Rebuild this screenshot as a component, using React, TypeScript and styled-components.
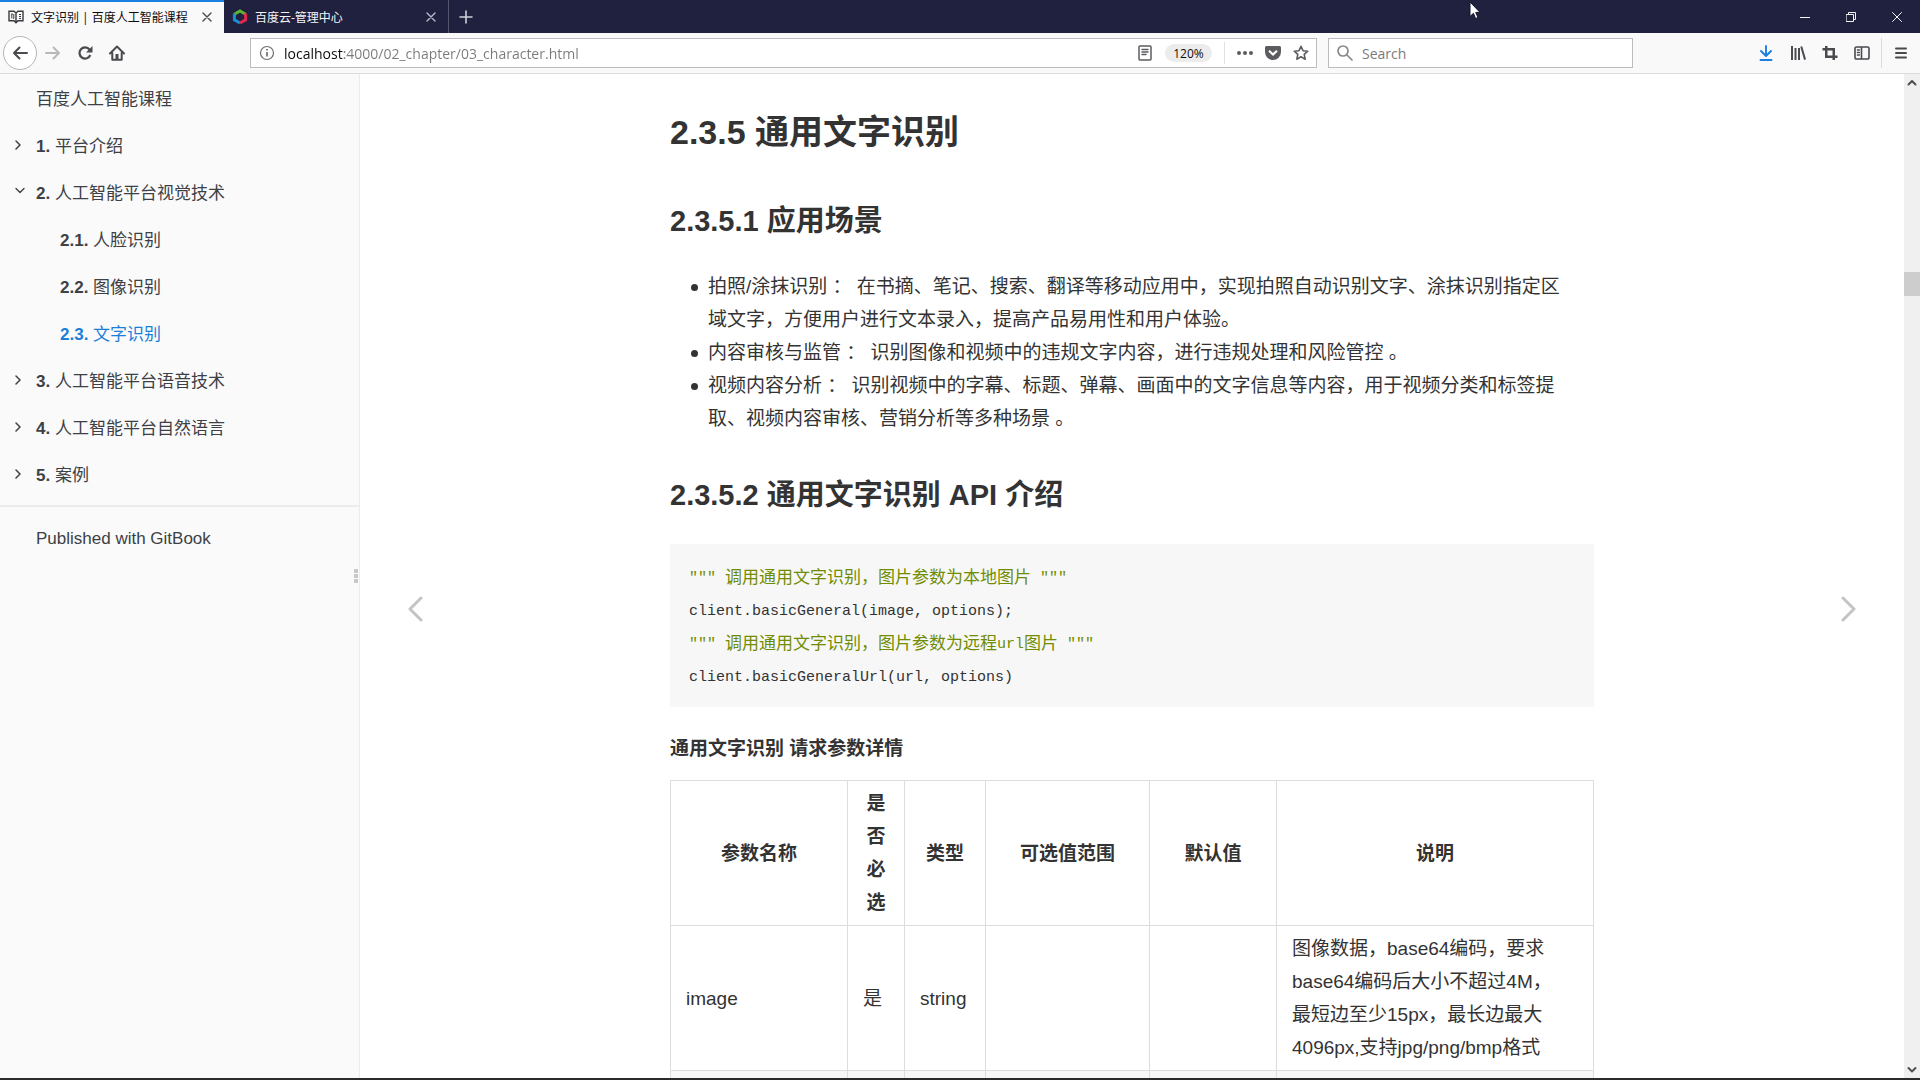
import React from "react";
import styled, { createGlobalStyle, css } from "styled-components";

const sans = '"Liberation Sans", "Noto Sans CJK SC", sans-serif';
const chrome = '"Open Sans", "Noto Sans CJK SC", sans-serif';
const mono = '"Liberation Mono", "Noto Sans CJK SC", monospace';

const GlobalStyle = createGlobalStyle`
  *, *::before, *::after { box-sizing: border-box; }
  body { margin: 0; background: #fff; font-family: ${sans}; overflow: hidden; }
  button, input { font: inherit; color: inherit; margin: 0; }
  button { padding: 0; border: 0; background: none; display: inline-flex; align-items: center; justify-content: center; }
  a { color: inherit; text-decoration: none; }
  svg { display: block; flex: none; }
`;

const Window = styled.div`
  display: flex;
  flex-direction: column;
  height: 100vh;
  overflow: hidden;
  border-bottom: 2px solid #2c2a2c;
`;

/* ---------- title bar ---------- */

const TitleBar = styled.header`
  position: relative;
  display: flex;
  flex: none;
  height: 33px;
  background: #20213f;
  font-family: ${chrome};
  font-size: 12px;
  color: #f4f4f8;
`;

const Tab = styled.div<{ $active?: boolean }>`
  display: flex;
  align-items: center;
  width: 224px;
  padding: 0 8px;
  gap: 7px;
  ${(p) =>
    p.$active &&
    css`
      background: #f9f9fa;
      color: #0c0c0d;
      box-shadow: inset 0 2px 0 #1a7fe0;
    `}
`;

const TabTitle = styled.span`
  flex: 1;
  white-space: nowrap;
  overflow: hidden;
`;

const TabClose = styled.button<{ $dark?: boolean }>`
  width: 18px;
  height: 18px;
  color: ${(p) => (p.$dark ? "#4a4a4f" : "#b9b9c8")};
`;

const NewTab = styled.button`
  width: 34px;
  border-left: 1px solid #55566e;
  color: #cfcfda;
`;

const WindowControls = styled.div`
  display: flex;
  margin-left: auto;
`;

const WindowButton = styled.button`
  width: 46px;
  color: #f4f4f8;
`;

const Pointer = styled.svg`
  position: absolute;
  left: 1469px;
  top: 1px;
`;

/* ---------- toolbar ---------- */

const Toolbar = styled.div`
  display: flex;
  align-items: center;
  flex: none;
  height: 41px;
  padding: 0 3px;
  background: #f9f9fa;
  border-bottom: 1px solid #dcdcde;
  font-family: ${chrome};
  font-size: 14px;
  color: #4a4a4f;
`;

const NavButton = styled.button<{ $faded?: boolean }>`
  width: 32px;
  height: 32px;
  color: ${(p) => (p.$faded ? "#b9b9bb" : "#4a4a4f")};
`;

const BackButton = styled(NavButton)`
  width: 34px;
  height: 34px;
  border: 1px solid #b5b5b7;
  border-radius: 50%;
  background: #fff;
`;

const Field = styled.div`
  display: flex;
  align-items: center;
  height: 30px;
  padding: 0 1px 0 8px;
  background: #fff;
  border: 1px solid #bcbcbe;
  color: #88888a;
`;

const AddressField = styled(Field)`
  flex: 1;
  margin-left: 117px;
`;

const SearchField = styled(Field)`
  width: 305px;
  margin-left: 11px;
`;

const TextInput = styled.input`
  flex: 1;
  min-width: 0;
  height: 26px;
  padding: 0;
  margin-left: 9px;
  border: 0;
  outline: 0;
  background: transparent;
  color: #0c0c0d;
  &::placeholder { color: #7a7a7c; opacity: 1; }
`;

/* host name dark, rest of the address grey */
const AddressInput = styled(TextInput)`
  background: linear-gradient(90deg, #0c0c0d 60px, #7a7a7c 60px);
  background-clip: text;
  -webkit-background-clip: text;
  -webkit-text-fill-color: transparent;
`;

const FieldButton = styled.button`
  width: 28px;
  height: 26px;
  color: #5c5c60;
`;

const ZoomButton = styled.button`
  width: 47px;
  height: 18px;
  margin: 0 12px 0 6px;
  border-radius: 9px;
  background: #ececed;
  font-size: 12px;
  color: #0c0c0d;
`;

const Divider = styled.span`
  width: 1px;
  height: 22px;
  margin-right: 6px;
  background: #e2e2e4;
`;

const Tools = styled.div`
  display: flex;
  align-items: center;
  margin-left: 117px;
`;

const ToolDivider = styled.span`
  width: 1px;
  height: 30px;
  margin: 0 3px;
  background: #dcdcde;
`;

const ToolButton = styled(NavButton)<{ $accent?: boolean }>`
  ${(p) => p.$accent && "color: #1a7fe0;"}
`;

/* ---------- page ---------- */

const Page = styled.div`
  display: flex;
  flex: 1;
  min-height: 0;
`;

const Sidebar = styled.nav`
  position: relative;
  flex: none;
  width: 360px;
  background: #fafafa;
  border-right: 1px solid #ececec;
  font-size: 17px;
  color: #3d4146;
`;

const Summary = styled.ul`
  list-style: none;
  margin: 0;
  padding: 0 0 8px;
`;

const Entry = styled.a<{ $level?: number; $active?: boolean }>`
  display: flex;
  align-items: center;
  height: 47px;
  padding-left: ${(p) => (p.$level === 2 ? 60 : 13)}px;
  color: ${(p) => (p.$active ? "#1a7fd8" : "inherit")};
`;

const Marker = styled.span`
  display: flex;
  width: 23px;
`;

const Published = styled.a`
  display: flex;
  align-items: center;
  height: 66px;
  padding-left: 36px;
  border-top: 2px solid #ececec;
`;

const Grip = styled.span`
  position: absolute;
  right: 1px;
  top: 495px;
  display: grid;
  gap: 1px;
  i { width: 4px; height: 4px; background: #c8c8c8; }
`;

const Body = styled.main`
  position: relative;
  flex: 1;
  overflow: hidden;
  background: #fff;
`;

const Article = styled.article`
  width: 924px;
  margin: 0 auto;
  padding-top: 29px;
  font-size: 19px;
  line-height: 33px;
  color: #333;
`;

const H2 = styled.h2`
  margin: 0;
  font-size: 34px;
  line-height: 58px;
`;

const H3 = styled.h3`
  margin: 36px 0 24px;
  font-size: 29px;
  line-height: 49px;
`;

const Bullets = styled.ul`
  list-style: none;
  margin: 0;
  padding: 0 24px 0 21px;
`;

const Bullet = styled.li`
  display: grid;
  grid-template-columns: 17px 1fr;
  white-space: pre-wrap;
  &::before {
    content: "";
    width: 7px;
    height: 7px;
    margin-top: 14px;
    border-radius: 50%;
    background: #333;
  }
`;

const Code = styled.pre`
  margin: 0;
  padding: 18px 19px 13px;
  background: #f7f7f7;
  font-family: ${mono};
  font-size: 15px;
  line-height: 33px;
`;

const CodeLine = styled.code<{ $string?: boolean }>`
  display: flex;
  height: 33px;
  font-family: inherit;
  color: ${(p) => (p.$string ? "#718c00" : "#333")};
`;

const Han = styled.span`
  font-size: 17px;
`;

const Caption = styled.p`
  margin: 25px 0 15px;
  font-weight: bold;
`;

const Params = styled.table`
  width: 100%;
  table-layout: fixed;
  border-collapse: collapse;
  th, td {
    padding: 6px 15px;
    border: 1px solid #dddddd;
    text-align: left;
  }
  th { text-align: center; }
  tbody tr:nth-child(2n) { background: #f8f8f8; }
`;

const Col = styled.col<{ $width?: number }>`
  ${(p) => p.$width && `width: ${p.$width}px;`}
`;

const PageTurn = styled.a<{ $side: "left" | "right" }>`
  position: absolute;
  top: 522px;
  ${(p) => p.$side}: 47px;
  color: #c4c4c4;
`;

const Scrollbar = styled.div`
  display: flex;
  flex-direction: column;
  align-items: center;
  justify-content: space-between;
  flex: none;
  width: 16px;
  padding: 5px 0 4px;
  background: #f0f0f0;
  color: #505050;
`;

const Thumb = styled.span`
  width: 16px;
  height: 24px;
  margin: 185px 0 auto;
  background: #cdcdcd;
`;

/* ---------- drawings ---------- */

type IconProps = { d: string; w?: number; h?: number; box?: string; stroke?: number; fill?: boolean };
const Icon = ({ d, w = 16, h = w, box = "0 0 16 16", stroke = 2, fill }: IconProps) => (
  <svg
    width={w}
    height={h}
    viewBox={box}
    fill={fill ? "currentColor" : "none"}
    stroke={fill ? "none" : "currentColor"}
    strokeWidth={stroke}
    strokeLinecap="round"
    strokeLinejoin="round"
    aria-hidden="true"
  >
    <path d={d} fillRule="evenodd" />
  </svg>
);

const BookIcon = () => (
  <svg width="16" height="14" viewBox="0 0 16 14" fill="none" stroke="#3c3c40" strokeWidth="1.4" aria-hidden="true">
    <path d="M8 3 6 1.2H1v9.6h5l2 2 2-2h5V1.2h-5L8 3v9" />
    <path d="M3.2 4h1.6M3.8 4v4.5M11 4.5h2M11 6.5h2M11 8.5h2M5.8 4v5" strokeWidth="1" />
  </svg>
);

const CloudIcon = () => (
  <svg width="16" height="16" viewBox="0 0 16 16" fill="none" strokeWidth="3" aria-hidden="true">
    <path d="M2.4 5.2 8 2l5.6 3.2" stroke="#5cb531" />
    <path d="M2.4 4.6v6.2L8 14" stroke="#1b8fd6" />
    <path d="M13.6 4.6v6.2L8 14" stroke="#e0284f" />
  </svg>
);

const CROSS = "M3 3l8 8M11 3l-8 8";
const RIGHT = "M1 1l4 4-4 4";
const DOWN = "M1 1l4 4 4-4";

const Chevron = ({ open }: { open?: boolean }) => (
  <Marker>
    {open ? (
      <Icon d={DOWN} w={14} h={9} box="-2 0 14 8" stroke={1.4} />
    ) : (
      <Icon d={RIGHT} w={10} h={12} box="-2 -1 10 12" stroke={1.5} />
    )}
  </Marker>
);

/* ---------- data ---------- */

type Chapter = { no?: string; title: string; level?: number; open?: boolean; active?: boolean };
const chapters: Chapter[] = [
  { title: "百度人工智能课程" },
  { no: "1.", title: "平台介绍" },
  { no: "2.", title: "人工智能平台视觉技术", open: true },
  { no: "2.1.", title: "人脸识别", level: 2 },
  { no: "2.2.", title: "图像识别", level: 2 },
  { no: "2.3.", title: "文字识别", level: 2, active: true },
  { no: "3.", title: "人工智能平台语音技术" },
  { no: "4.", title: "人工智能平台自然语言" },
  { no: "5.", title: "案例" },
];

const scenes = [
  "拍照/涂抹识别 ： 在书摘、笔记、搜索、翻译等移动应用中，实现拍照自动识别文字、涂抹识别指定区域文字，方便用户进行文本录入，提高产品易用性和用户体验。",
  "内容审核与监管 ： 识别图像和视频中的违规文字内容，进行违规处理和风险管控 。",
  "视频内容分析 ： 识别视频中的字幕、标题、弹幕、画面中的文字信息等内容，用于视频分类和标签提取、视频内容审核、营销分析等多种场景 。",
];

const columns: { name: string; width?: number }[] = [
  { name: "参数名称", width: 177 },
  { name: "是否必选", width: 57 },
  { name: "类型", width: 81 },
  { name: "可选值范围", width: 164 },
  { name: "默认值", width: 127 },
  { name: "说明" },
];

export default function App() {
  return (
    <Window>
      <GlobalStyle />
      <TitleBar>
        <Tab $active>
          <BookIcon />
          <TabTitle>文字识别 | 百度人工智能课程</TabTitle>
          <TabClose $dark aria-label="Close tab"><Icon d={CROSS} w={14} box="0 0 14 14" stroke={1.4} /></TabClose>
        </Tab>
        <Tab>
          <CloudIcon />
          <TabTitle>百度云-管理中心</TabTitle>
          <TabClose aria-label="Close tab"><Icon d={CROSS} w={14} box="0 0 14 14" stroke={1.4} /></TabClose>
        </Tab>
        <NewTab aria-label="New tab"><Icon d="M8 2v12M2 8h12" stroke={1.6} /></NewTab>
        <WindowControls>
          <WindowButton aria-label="Minimize"><Icon d="M0 5.5h10" w={10} box="0 0 10 10" stroke={1} /></WindowButton>
          <WindowButton aria-label="Restore"><Icon d="M.5 2.5h7v7h-7zM2.5 2.5v-2h7v7h-2" w={10} box="0 0 10 10" stroke={1} /></WindowButton>
          <WindowButton aria-label="Close"><Icon d="M.5.5l9 9M9.5.5l-9 9" w={10} box="0 0 10 10" stroke={1} /></WindowButton>
        </WindowControls>
        <Pointer width="12" height="19" viewBox="0 0 12 19" aria-hidden="true">
          <path d="M1 1v14.5l3.4-3.2 2.3 5.2 2.3-1-2.3-5.1H11z" fill="#fff" stroke="#15162c" strokeWidth="1" />
        </Pointer>
      </TitleBar>

      <Toolbar>
        <BackButton aria-label="Back"><Icon d="M15 8H2M7.500 2.500L2 8l5.500 5.500" /></BackButton>
        <NavButton $faded aria-label="Forward"><Icon d="M1 8h13M8.500 2.500L14 8l-5.500 5.500" /></NavButton>
        <NavButton aria-label="Reload">
          <svg width="16" height="16" viewBox="0 0 16 16" aria-hidden="true">
            <path d="M12.500 4.500A5.600 5.600 0 1 0 13.300 10" fill="none" stroke="currentColor" strokeWidth="2.200" />
            <path d="M15.500 1v6.500H9z" fill="currentColor" />
          </svg>
        </NavButton>
        <NavButton aria-label="Home">
          <svg width="16" height="16" viewBox="0 0 16 16" fill="none" stroke="currentColor" strokeWidth="2" strokeLinejoin="round" strokeLinecap="round" aria-hidden="true">
            <path d="M1 8.500 8 1.500l7 7M3.300 8v6.800h9.400V8" />
            <path d="M8 9v5.500" strokeWidth="3" strokeLinecap="butt" />
          </svg>
        </NavButton>

        <AddressField>
          <svg width="16" height="16" viewBox="0 0 16 16" fill="none" stroke="#6e6e72" aria-hidden="true">
            <circle cx="8" cy="8" r="6.500" strokeWidth="1.200" />
            <path d="M8 7v4.500M8 4v1.600" strokeWidth="1.700" />
          </svg>
          <AddressInput aria-label="Address" defaultValue="localhost:4000/02_chapter/03_character.html" spellCheck={false} />
          <FieldButton aria-label="Reader view">
            <Icon d="M3 1h10a1 1 0 0 1 1 1v12a1 1 0 0 1-1 1H3a1 1 0 0 1-1-1V2a1 1 0 0 1 1-1zM5 4.500h6M5 7h6M5 9.500h4" stroke={1.5} />
          </FieldButton>
          <ZoomButton>120%</ZoomButton>
          <Divider />
          <FieldButton aria-label="Page actions">
            <Icon fill d="M2 6a2 2 0 1 1 0 4 2 2 0 0 1 0-4zM8 6a2 2 0 1 1 0 4 2 2 0 0 1 0-4zM14 6a2 2 0 1 1 0 4 2 2 0 0 1 0-4z" />
          </FieldButton>
          <FieldButton aria-label="Save to Pocket">
            <Icon fill d="M1.500 1h13A1.500 1.500 0 0 1 16 2.500V7a8 8 0 0 1-16 0V2.500A1.500 1.500 0 0 1 1.500 1zM3.300 6.400 8 11l4.700-4.600-1.400-1.500L8 8.100 4.700 4.900z" />
          </FieldButton>
          <FieldButton aria-label="Bookmark">
            <Icon d="M8 1.300l2 4.400 4.800.5-3.600 3.200 1 4.800L8 11.800l-4.200 2.400 1-4.800L1.200 6.200 6 5.700z" stroke={1.6} />
          </FieldButton>
        </AddressField>

        <SearchField>
          <Icon d="M6 1a5 5 0 1 1 0 10A5 5 0 0 1 6 1zM10 10l5 5" stroke={1.7} />
          <TextInput aria-label="Search" placeholder="Search" />
        </SearchField>

        <Tools>
          <ToolButton $accent aria-label="Downloads"><Icon d="M8 1v9.500M3 6l5 5 5-5M2.500 15h11" stroke={1.9} /></ToolButton>
          <ToolButton aria-label="Library">
            <Icon fill d="M1 1h2v14H1zM4.500 3h2v12h-2zM8 3h2v12H8zM10.300 1.700l1.900-.5L16 14.300l-1.900.6z" />
          </ToolButton>
          <ToolButton aria-label="Screenshot">
            <Icon fill d="M3 1h2.500v2H13v7.500h2.500V13H13v2h-2.500v-2H3V5.500H.500V3H3zM5.500 5.500v5h5v-5z" />
          </ToolButton>
          <ToolButton aria-label="Sidebars">
            <Icon d="M2.500 2h11A1.500 1.500 0 0 1 15 3.500v9a1.500 1.500 0 0 1-1.500 1.500h-11A1.500 1.500 0 0 1 1 12.500v-9A1.500 1.500 0 0 1 2.500 2zM7.500 2v12M3.500 5h1.800M3.500 7.500h1.800M3.500 10h1.800" stroke={1.6} />
          </ToolButton>
          <ToolDivider />
          <ToolButton aria-label="Menu"><Icon d="M3 3.500h10M3 8h10M3 12.500h10" stroke={2} /></ToolButton>
        </Tools>
      </Toolbar>

      <Page>
        <Sidebar>
          <Summary>
            {chapters.map((c) => (
              <li key={c.title}>
                <Entry href="#" $level={c.level} $active={c.active}>
                  {c.level !== 2 && (c.no ? <Chevron open={c.open} /> : <Marker />)}
                  <span>
                    {c.no && <b>{c.no} </b>}
                    {c.title}
                  </span>
                </Entry>
              </li>
            ))}
          </Summary>
          <Published href="#">Published with GitBook</Published>
          <Grip><i /><i /><i /></Grip>
        </Sidebar>

        <Body>
          <Article>
            <H2>2.3.5 通用文字识别</H2>
            <H3>2.3.5.1 应用场景</H3>
            <Bullets>{scenes.map((s) => <Bullet key={s}>{s}</Bullet>)}</Bullets>
            <H3>2.3.5.2 通用文字识别 API 介绍</H3>
            <Code>
              <CodeLine $string>{'""" '}<Han>调用通用文字识别，图片参数为本地图片</Han>{' """'}</CodeLine>
              <CodeLine>client.basicGeneral(image, options);</CodeLine>
              <CodeLine $string>{'""" '}<Han>调用通用文字识别，图片参数为远程</Han>url<Han>图片</Han>{' """'}</CodeLine>
              <CodeLine>client.basicGeneralUrl(url, options)</CodeLine>
            </Code>
            <Caption>通用文字识别 请求参数详情</Caption>
            <Params>
              <colgroup>{columns.map((c) => <Col key={c.name} $width={c.width} />)}</colgroup>
              <thead>
                <tr>{columns.map((c) => <th key={c.name}>{c.name}</th>)}</tr>
              </thead>
              <tbody>
                <tr>
                  <td>image</td>
                  <td>是</td>
                  <td>string</td>
                  <td />
                  <td />
                  <td>
                    图像数据，base64编码，要求<br />
                    base64编码后大小不超过4M，<br />
                    最短边至少15px，最长边最大<br />
                    4096px,支持jpg/png/bmp格式
                  </td>
                </tr>
                <tr>
                  <td /><td /><td /><td /><td /><td />
                </tr>
              </tbody>
            </Params>
          </Article>
          <PageTurn $side="left" href="#" aria-label="Previous page">
            <Icon d="M14 2L3 13l11 11" w={17} h={26} box="0 0 17 26" stroke={3} />
          </PageTurn>
          <PageTurn $side="right" href="#" aria-label="Next page">
            <Icon d="M3 2l11 11L3 24" w={17} h={26} box="0 0 17 26" stroke={3} />
          </PageTurn>
        </Body>

        <Scrollbar>
          <Icon d="M1.500 5.500L5 2l3.500 3.500" w={10} h={8} box="0 0 10 8" stroke={2} />
          <Thumb />
          <Icon d="M1.500 2L5 5.500 8.500 2" w={10} h={8} box="0 0 10 8" stroke={2} />
        </Scrollbar>
      </Page>
    </Window>
  );
}
